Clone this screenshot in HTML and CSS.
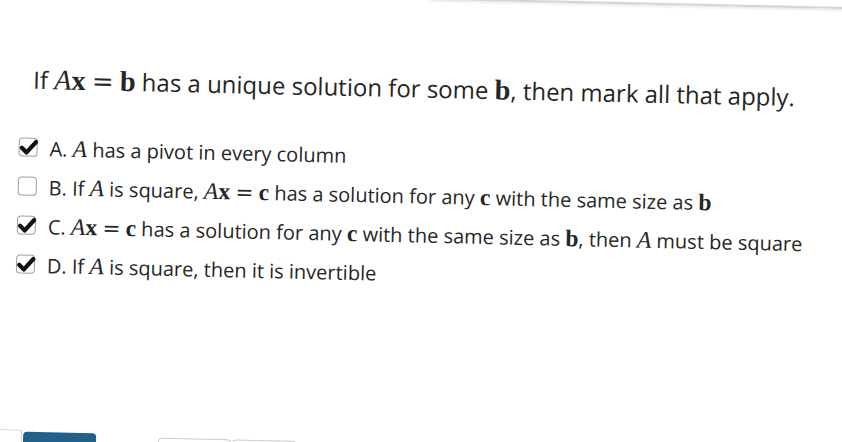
FILE: index.html
```html
<!DOCTYPE html>
<html lang="en">
<head>
<meta charset="utf-8">
<title>Question</title>
<link rel="stylesheet" href="styles.css">
</head>
<body>
<div class="page">
  <div class="topbar"></div>
  <h1 class="question">If <span class="m"><i>A</i><b>x</b></span> <span class="eq">=</span> <span class="m"><b>b</b></span> has a unique solution for some <span class="m"><b>b</b></span>, then mark all that apply.</h1>
  <ul class="options">
    <li class="option">
      <span class="box checked"><svg viewBox="0 0 20 20" width="20" height="20"><path d="M3.2 10.2 L8 14.8 L17.2 4.2" fill="none" stroke="#111" stroke-width="4.2" stroke-linecap="round" stroke-linejoin="round"/></svg></span>
      <span class="label">A. <span class="m"><i>A</i></span> has a pivot in every column</span>
    </li>
    <li class="option">
      <span class="box"></span>
      <span class="label">B. If <span class="m"><i>A</i></span> is square, <span class="m"><i>A</i><b>x</b></span> <span class="eq">=</span> <span class="m"><b>c</b></span> has a solution for any <span class="m"><b>c</b></span> with the same size as <span class="m"><b>b</b></span></span>
    </li>
    <li class="option">
      <span class="box checked"><svg viewBox="0 0 20 20" width="20" height="20"><path d="M3.2 10.2 L8 14.8 L17.2 4.2" fill="none" stroke="#111" stroke-width="4.2" stroke-linecap="round" stroke-linejoin="round"/></svg></span>
      <span class="label">C. <span class="m"><i>A</i><b>x</b></span> <span class="eq">=</span> <span class="m"><b>c</b></span> has a solution for any <span class="m"><b>c</b></span> with the same size as <span class="m"><b>b</b></span>, then <span class="m"><i>A</i></span> must be square</span>
    </li>
    <li class="option">
      <span class="box checked"><svg viewBox="0 0 20 20" width="20" height="20"><path d="M3.2 10.2 L8 14.8 L17.2 4.2" fill="none" stroke="#111" stroke-width="4.2" stroke-linecap="round" stroke-linejoin="round"/></svg></span>
      <span class="label">D. If <span class="m"><i>A</i></span> is square, then it is invertible</span>
    </li>
  </ul>
  <div class="footer">
    <span class="btn ghost"></span>
    <span class="btn primary"></span>
    <span class="btn outline first"></span>
    <span class="btn outline"></span>
  </div>
</div>
</body>
</html>
```
FILE: styles.css
```css
html, body {
  margin: 0;
  padding: 0;
  background: #ffffff;
  overflow: hidden;
  height: 442px;
}
.page {
  width: 880px;
  height: 442px;
  transform: rotate(1.3deg);
  transform-origin: 0 0;
  font-family: "Open Sans", "Liberation Sans", sans-serif;
  color: #262626;
  position: relative;
  padding-top: 1px;
  box-sizing: border-box;
}
.topbar {
  position: absolute;
  left: 430px;
  right: 0;
  top: -12px;
  height: 0;
  border-bottom: 2px solid #d4d4d4;
  box-shadow: 0 1px 3px rgba(0,0,0,0.15);
}
.question {
  margin: 62px 0 0 35px;
  font-size: 24px;
  line-height: 32px;
  font-weight: 400;
  white-space: nowrap;
}
.m {
  font-family: "Liberation Serif", "DejaVu Serif", serif;
  font-size: 1.18em;
  line-height: 1;
}
.m i { font-style: italic; }
.m b { font-weight: 700; }
.eq {
  font-family: "DejaVu Serif", "Liberation Serif", serif;
  font-size: 1.08em;
  line-height: 1;
}
.options {
  list-style: none;
  margin: 40px 0 0 22px;
  padding: 0;
  display: flex;
  flex-direction: column;
  gap: 13px;
}
.option {
  display: flex;
  align-items: flex-start;
  gap: 12px;
  font-size: 20px;
  line-height: 26px;
  white-space: nowrap;
}
.box {
  width: 17px;
  height: 17px;
  margin-top: 2px;
  border: 1.5px solid #a0a0a0;
  border-radius: 4px;
  background: #fff;
  flex: none;
  position: relative;
}
.box svg {
  position: absolute;
  left: -1px;
  top: -1px;
}
.footer {
  display: flex;
  align-items: flex-start;
  margin-top: 151px;
  margin-left: 10px;
}
.btn {
  display: block;
  height: 36px;
  border-radius: 4px;
  flex: none;
}
.ghost {
  width: 21px;
  border: 1px solid #cfcfcf;
  border-left: none;
  border-radius: 0 4px 4px 0;
}
.primary {
  width: 73px;
  background: #235f89;
  margin-top: 2px;
  margin-left: 1px;
}
.outline {
  width: 62px;
  border: 1px solid #cccccc;
  margin-top: 5px;
}
.outline.first {
  width: 71px;
  margin-left: 62px;
  margin-right: 1px;
}
```
